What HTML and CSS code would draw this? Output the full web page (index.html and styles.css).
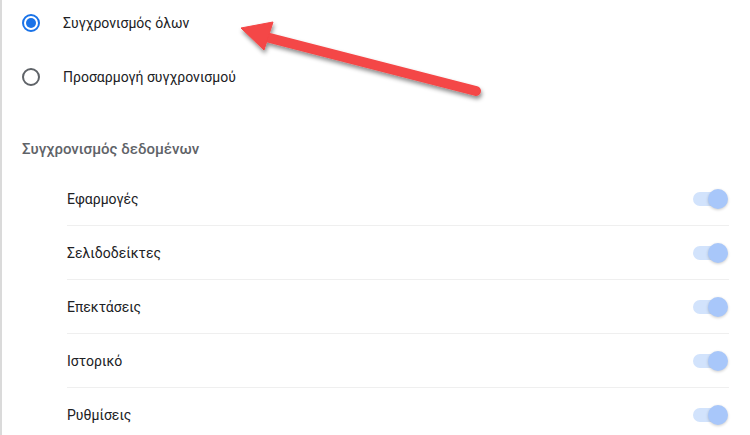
FILE: index.html
```html
<!DOCTYPE html>
<html lang="el">
<head>
    <meta charset="UTF-8">
    <meta name="viewport" content="width=device-width, initial-scale=1.0">
    <title>Συγχρονισμός</title>
    <link rel="stylesheet" href="styles.css">
</head>
<body>
    <div class="page">
        <div class="radio-group">
            <label class="radio-row">
                <span class="radio checked"></span>
                <span class="radio-label">Συγχρονισμός όλων</span>
            </label>
            <label class="radio-row">
                <span class="radio"></span>
                <span class="radio-label">Προσαρμογή συγχρονισμού</span>
            </label>
        </div>

        <h3 class="section-title">Συγχρονισμός δεδομένων</h3>

        <div class="list">
            <div class="row">
                <span>Εφαρμογές</span>
                <span class="toggle"><span class="knob"></span></span>
            </div>
            <div class="row">
                <span>Σελιδοδείκτες</span>
                <span class="toggle"><span class="knob"></span></span>
            </div>
            <div class="row">
                <span>Επεκτάσεις</span>
                <span class="toggle"><span class="knob"></span></span>
            </div>
            <div class="row">
                <span>Ιστορικό</span>
                <span class="toggle"><span class="knob"></span></span>
            </div>
            <div class="row">
                <span>Ρυθμίσεις</span>
                <span class="toggle"><span class="knob"></span></span>
            </div>
        </div>

        <!-- annotation arrow drawn over the page -->
        <svg class="arrow" width="750" height="435" viewBox="0 0 750 435">
            <defs>
                <filter id="shadow" x="-20%" y="-50%" width="140%" height="200%">
                    <feDropShadow dx="1" dy="3" stdDeviation="2" flood-color="#000" flood-opacity="0.45"/>
                </filter>
            </defs>
            <g filter="url(#shadow)" fill="#f44646" stroke="#f44646">
                <line x1="476" y1="91" x2="262" y2="36" stroke-width="10" stroke-linecap="round"/>
                <polygon points="241,28 273,22 264,50" stroke-width="1" stroke-linejoin="round"/>
            </g>
        </svg>
    </div>
</body>
</html>
```

FILE: styles.css
```css
html, body {
    margin: 0;
    background: #fff;
}

body {
    font-family: Roboto, 'Noto Sans', Arial, sans-serif;
    font-size: 14px;
    color: #202124;
}

.page {
    position: relative;
    height: 435px;
    border-left: 2px solid #dadada;
    overflow: hidden;
}

.radio-group {
    display: flex;
    flex-direction: column;
}

.radio-row {
    display: flex;
    align-items: center;
    height: 54px;
    margin-top: -4px;
    padding-left: 20px;
}

.radio-row + .radio-row {
    margin-top: 0;
}

.radio {
    box-sizing: border-box;
    width: 18px;
    height: 18px;
    border: 2px solid #5f6368;
    border-radius: 50%;
    margin-right: 23px;
    position: relative;
}

.radio.checked {
    border-color: #1a73e8;
}

.radio.checked::after {
    content: "";
    position: absolute;
    left: 2px;
    top: 2px;
    width: 10px;
    height: 10px;
    border-radius: 50%;
    background: #1a73e8;
}

.section-title {
    margin: 0;
    padding: 36px 0 0 20px;
    height: 32px;
    font-size: 15px;
    font-weight: 500;
    color: #5f6368;
}

.list {
    margin-left: 65px;
    margin-right: 21px;
}

.row {
    display: flex;
    align-items: center;
    justify-content: space-between;
    height: 53px;
    border-bottom: 1px solid #efefef;
}

.row:last-child {
    border-bottom: none;
}

.toggle {
    position: relative;
    width: 32px;
    height: 14px;
    border-radius: 7px;
    background: #d2e3fc;
    margin-right: 4px;
}

.knob {
    position: absolute;
    right: -3px;
    top: -3px;
    width: 20px;
    height: 20px;
    border-radius: 50%;
    background: #a8c7fa;
    box-shadow: 0 1px 3px rgba(0, 0, 0, 0.2);
}

.arrow {
    position: absolute;
    left: -2px;
    top: 0;
    pointer-events: none;
}
```
